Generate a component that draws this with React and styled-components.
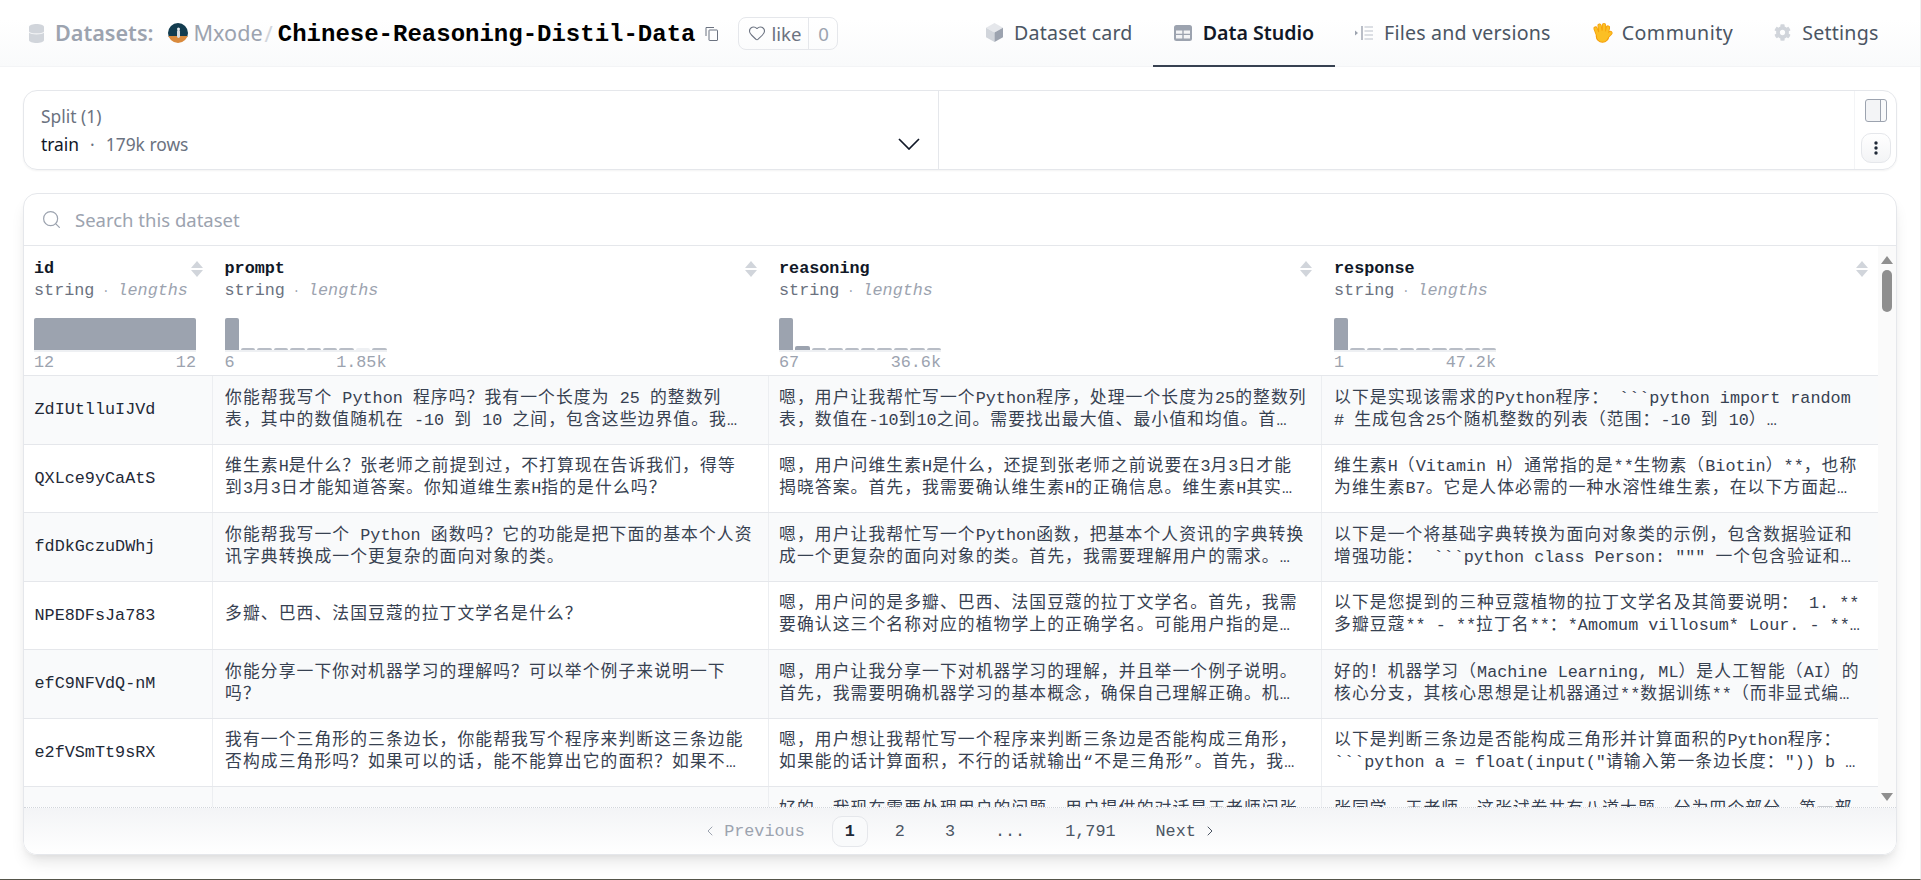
import styled, { createGlobalStyle } from "styled-components";
import { ChevronLeft, ChevronRight, Heart, Search } from "lucide-react";
import { FaCog } from "react-icons/fa";

const SANS = `"Noto Sans", "Noto Sans CJK SC", sans-serif`;
const MONO = `"Liberation Mono", "Noto Sans CJK SC", monospace`;

const GlobalStyle = createGlobalStyle`
  html, body {
    margin: 0;
    padding: 0;
    background: #fff;
    font-family: ${SANS};
  }
  * {
    box-sizing: border-box;
  }
`;

const Page = styled.div`
  height: 880px;
  overflow: hidden;
  display: flex;
  flex-direction: column;
  border-right: 1px solid #f0f0f0;
  border-bottom: 1px solid #55554a;
`;

const Header = styled.header`
  height: 67px;
  flex-shrink: 0;
  display: flex;
  align-items: center;
  padding: 0 21px 0 29px;
  background: linear-gradient(to top, #f9fafb, #fff 70%);
  border-bottom: 1px solid #f3f4f6;
`;

const Crumb = styled.span`
  font-size: 21.6px;
  line-height: 1;
  color: #9ca3af;
  font-weight: ${(p) => (p.$bold ? 600 : 400)};
`;

const IconSlot = styled.span`
  display: flex;
  margin: 0 ${(p) => p.$mr || 0}px 0 ${(p) => p.$ml || 0}px;
`;

const Slash = styled.span`
  font-size: 22px;
  line-height: 1;
  color: #d1d5db;
  margin: 0 5px 0 2px;
`;

const RepoName = styled.span`
  font-family: ${MONO};
  font-size: 24px;
  line-height: 1;
  font-weight: 700;
  color: #000;
  margin-top: 3px;
`;

const LikeBox = styled.div`
  display: flex;
  align-items: stretch;
  height: 33px;
  width: 100px;
  margin-left: 19px;
  border: 1px solid #e5e7eb;
  border-radius: 8px;
  font-size: 18.6px;
  color: #6b7280;
`;

const LikeLabel = styled.span`
  flex: 1;
  display: flex;
  align-items: center;
  gap: 5px;
  padding-left: 9px;
  border-right: 1px solid #e5e7eb;
`;

const LikeCount = styled.span`
  width: 28px;
  display: flex;
  align-items: center;
  justify-content: center;
  color: #9ca3af;
`;

const Tabs = styled.nav`
  margin-left: auto;
  display: flex;
  align-self: stretch;
  margin-bottom: -1px;
`;

const Tab = styled.a`
  display: flex;
  align-items: center;
  gap: 11px;
  padding: 0 20.5px;
  font-size: 19.6px;
  white-space: nowrap;
  letter-spacing: ${(p) => (p.$active ? 0 : p.$spacing || 0.2)}px;
  color: ${(p) => (p.$active ? "#111827" : "#4b5563")};
  font-weight: ${(p) => (p.$active ? 600 : 400)};
  border-bottom: 2px solid ${(p) => (p.$active ? "#374151" : "transparent")};
`;

const Main = styled.main`
  flex: 1;
  min-height: 0;
  display: flex;
  flex-direction: column;
  gap: 23px;
  padding: 23px 23px 24px 23px;
`;

const SplitCard = styled.section`
  height: 80px;
  flex-shrink: 0;
  display: grid;
  grid-template-columns: 915px 1fr 42px;
  border: 1px solid #e5e7eb;
  border-radius: 14px;
  box-shadow: 0 1px 2px rgba(0, 0, 0, 0.05);
`;

const SplitSelect = styled.div`
  display: flex;
  align-items: flex-end;
  justify-content: space-between;
  padding: 0 18px 11px 17px;
  border-right: 1px solid #e5e7eb;
`;

const SplitLabel = styled.div`
  font-size: 17.4px;
  line-height: 30px;
  color: #6b7280;
`;

const SplitValue = styled.div`
  font-size: 17.4px;
  line-height: 27px;
  color: #6b7280;

  b {
    font-weight: 400;
    color: #111827;
  }

  i {
    font-style: normal;
    margin: 0 11px;
  }
`;

const SelectChevron = styled.svg`
  margin-bottom: 8px;
`;

const SideTools = styled.div`
  display: flex;
  flex-direction: column;
  align-items: center;
  justify-content: space-between;
  padding: 8px 0 6px;
  border-left: 1px solid #f3f4f6;
`;

const PanelToggle = styled.div`
  width: 22px;
  height: 23px;
  border: 1px solid #9ca3af;
  border-radius: 3px;
  background: linear-gradient(to right, #f3f4f6 14px, #9ca3af 14px, #9ca3af 15px, #f9fafb 15px);
`;

const KebabButton = styled.button`
  width: 30px;
  height: 30px;
  padding: 0;
  display: flex;
  align-items: center;
  justify-content: center;
  border: 1px solid #e5e7eb;
  border-radius: 10px;
  background: linear-gradient(to bottom, #fff, #f3f4f6);
`;

const DataCard = styled.section`
  flex: 1;
  min-height: 0;
  display: flex;
  flex-direction: column;
  overflow: hidden;
  border: 1px solid #e5e7eb;
  border-radius: 14px;
  box-shadow: 0 10px 15px -3px rgba(0, 0, 0, 0.1), 0 4px 6px -2px rgba(0, 0, 0, 0.05);
`;

const SearchRow = styled.div`
  height: 52px;
  flex-shrink: 0;
  display: flex;
  align-items: center;
  gap: 13px;
  padding-left: 17px;
  border-bottom: 1px solid #e5e7eb;
  font-size: 18.5px;
  color: #9ca3af;
`;

const TableArea = styled.div`
  flex: 1;
  min-height: 0;
  display: flex;
  overflow: hidden;
`;

const Table = styled.div`
  flex: 1;
  min-width: 0;
  overflow: hidden;
  font-family: ${MONO};
  font-size: 16.8px;
`;

const Row = styled.div`
  display: grid;
  grid-template-columns: 189px 556px 553px 556px;
`;

const HeadRow = styled(Row)`
  height: 130px;
  border-bottom: 1px solid #e5e7eb;
`;

const HeadCell = styled.div`
  position: relative;
  padding: 12px 0 0 ${(p) => p.$pad}px;
`;

const ColName = styled.div`
  font-weight: 700;
  line-height: 22px;
  color: #111827;
`;

const ColType = styled.div`
  line-height: 22px;
  color: #6b7280;

  i {
    color: #9ca3af;
  }

  span {
    display: inline-block;
    width: 23px;
    text-align: center;
    font-size: 12px;
    color: #9ca3af;
  }
`;

const SortArrows = styled.div`
  position: absolute;
  top: 15px;
  right: ${(p) => p.$right}px;
  display: flex;
  flex-direction: column;
  gap: 2px;
`;

const SortArrow = styled.span`
  width: 0;
  height: 0;
  border-left: 6px solid transparent;
  border-right: 6px solid transparent;
  ${(p) => (p.$down ? "border-top" : "border-bottom")}: 7px solid #d1d5db;
`;

const Histogram = styled.div`
  width: 162px;
  height: 34px;
  margin-top: 15px;
  display: flex;
  align-items: flex-end;
  gap: 2px;
  border-bottom: 2px solid #eef0f3;
`;

const Bar = styled.span`
  flex: 1;
  min-width: 0;
  border-radius: 2px 2px 0 0;
  background: ${(p) => p.$tone};
`;

const RangeLabels = styled.div`
  width: 162px;
  display: flex;
  justify-content: space-between;
  line-height: 22px;
  color: #9ca3af;
`;

const DataRow = styled(Row)`
  height: 68.5px;
  background: ${(p) => (p.$odd ? "#f9fafb" : "#fff")};
  border-bottom: 1px solid #e5e7eb;
`;

const Cell = styled.div`
  display: flex;
  align-items: center;
  min-width: 0;
  padding: 0 ${(p) => p.$padR || 14.5}px 0 ${(p) => p.$pad}px;
  border-right: 1px solid #eceef1;
  color: #374151;

  &:last-child {
    border-right: none;
  }
`;

const Clamp = styled.div`
  display: -webkit-box;
  -webkit-box-orient: vertical;
  -webkit-line-clamp: 2;
  overflow: hidden;
  line-height: 22px;
  word-break: normal;
`;

const Han = styled.span`
  letter-spacing: 1.1px;
`;

const IdText = styled.span`
  color: #1f2937;
`;

const ScrollTrack = styled.div`
  width: 18px;
  flex-shrink: 0;
  display: flex;
  flex-direction: column;
  align-items: center;
  padding: 10px 0 6px;
  background: #fafafa;
`;

const ScrollArrow = styled.span`
  width: 0;
  height: 0;
  border-left: 6px solid transparent;
  border-right: 6px solid transparent;
  ${(p) => (p.$down ? "border-top" : "border-bottom")}: 8px solid #8f8f8f;
  margin-top: ${(p) => (p.$down ? "auto" : 0)};
`;

const ScrollThumb = styled.span`
  width: 10px;
  height: 42px;
  margin-top: 6px;
  border-radius: 5px;
  background: #8f8f8f;
`;

const Pagination = styled.nav`
  height: 47px;
  flex-shrink: 0;
  display: flex;
  align-items: center;
  justify-content: center;
  gap: 14px;
  border-top: 1px dotted #d1d5db;
  background: linear-gradient(to bottom, #f3f4f6, #fff);
  font-family: ${MONO};
  font-size: 16.8px;
`;

const PageLink = styled.a`
  height: 31px;
  display: flex;
  align-items: center;
  gap: 6px;
  padding: 0 12px;
  border-radius: 10px;
  border: 1px solid ${(p) => (p.$current ? "#e5e7eb" : "transparent")};
  background: ${(p) => (p.$current ? "#f9fafb" : "transparent")};
  font-weight: ${(p) => (p.$current ? 700 : 400)};
  color: ${(p) => (p.$muted ? "#9ca3af" : p.$current ? "#1f2937" : "#4b5563")};
`;

const DatabaseIcon = () => (
  <svg width="15" height="19" viewBox="0 0 15 19">
    <path d="M0 3c0-4 15-4 15 0v13c0 4-15 4-15 0z" fill="#d1d5db" />
    <path d="M0 8c2 2.6 13 2.6 15 0" fill="none" stroke="#f3f4f6" strokeWidth="1.2" />
  </svg>
);

const Avatar = () => (
  <svg width="20" height="20" viewBox="0 0 20 20">
    <defs>
      <clipPath id="avatar-clip">
        <circle cx="10" cy="10" r="10" />
      </clipPath>
    </defs>
    <g clipPath="url(#avatar-clip)">
      <rect width="20" height="14" fill="#123c4f" />
      <rect y="13" width="20" height="7" fill="#d98a3d" />
      <rect x="9" y="7" width="3" height="8" rx="1.4" fill="#d8dde0" />
      <circle cx="10.5" cy="6" r="1.5" fill="#e8ecef" />
    </g>
  </svg>
);

const CopyIcon = () => (
  <svg width="14" height="15" viewBox="0 0 14 15" fill="none" stroke="#6b7280" strokeWidth="1">
    <path d="M1 10V1.5h8" />
    <rect x="4" y="4" width="8.5" height="10.5" rx="0.5" />
  </svg>
);

const CubeIcon = () => (
  <svg width="17" height="19" viewBox="0 0 17 19">
    <path d="M8.5 0 17 4.7 8.5 9.4 0 4.7z" fill="#e5e7eb" />
    <path d="M0 4.7 8.5 9.4V19L0 14.3z" fill="#d1d5db" />
    <path d="M17 4.7 8.5 9.4V19l8.5-4.7z" fill="#9ca3af" />
  </svg>
);

const TableIcon = () => (
  <svg width="18" height="16" viewBox="0 0 18 16">
    <rect width="18" height="16" rx="2.5" fill="#9ca3af" />
    <path d="M2 5.5h6.3v3.2H2zM9.7 5.5H16v3.2H9.7zM2 10h6.3v3.5H2zM9.7 10H16v3.5H9.7z" fill="#f3f4f6" />
  </svg>
);

const FilesIcon = () => (
  <svg width="18" height="14" viewBox="0 0 18 14" fill="none">
    <path d="M0 4.5 3 7 0 9.5z" fill="#9ca3af" />
    <path d="M7 0v14" stroke="#9ca3af" strokeWidth="1.4" />
    <path d="M9.500 1H18M9.500 5H18M9.500 9H18M9.500 13H18" stroke="#d1d5db" strokeWidth="1.4" />
  </svg>
);

const HAND_STROKES = "M6 13 3.500 6.500M9 12.500 7.500 3.500M12 12.500 12 3M14.500 13 16 5.500M14 15.500 18.500 11M9 15h3";

const HandIcon = () => (
  <svg width="22" height="21" viewBox="0 0 22 21" fill="none" strokeLinecap="round">
    <circle cx="10.500" cy="14" r="6.200" fill="#fbbf24" stroke="#f59e0b" strokeWidth="1.200" />
    <path d={HAND_STROKES} stroke="#f59e0b" strokeWidth="4.200" />
    <path d={HAND_STROKES} stroke="#fbbf24" strokeWidth="2.600" />
    <circle cx="10.500" cy="14" r="5.600" fill="#fbbf24" />
  </svg>
);

const KebabIcon = () => (
  <svg width="4" height="14" viewBox="0 0 4 14" fill="#1f2937">
    <circle cx="2" cy="2" r="1.700" />
    <circle cx="2" cy="7" r="1.700" />
    <circle cx="2" cy="12" r="1.700" />
  </svg>
);

const rows = [
  {
    id: "ZdIUtlluIJVd",
    prompt: "你能帮我写个 Python 程序吗？我有一个长度为 25 的整数列表，其中的数值随机在 -10 到 10 之间，包含这些边界值。我需要找出最大值、最小值和平均值。",
    reasoning: "嗯，用户让我帮忙写一个Python程序，处理一个长度为25的整数列表，数值在-10到10之间。需要找出最大值、最小值和均值。首先，我需要生成这个列表。",
    response: "以下是实现该需求的Python程序： ```python import random # 生成包含25个随机整数的列表（范围：-10 到 10） random_numbers_list_with_values = [random.randint(-10, 10)]",
  },
  {
    id: "QXLce9yCaAtS",
    prompt: "维生素H是什么？张老师之前提到过，不打算现在告诉我们，得等到3月3日才能知道答案。你知道维生素H指的是什么吗？",
    reasoning: "嗯，用户问维生素H是什么，还提到张老师之前说要在3月3日才能揭晓答案。首先，我需要确认维生素H的正确信息。维生素H其实就是生物素，也叫维生素B7。",
    response: "维生素H（Vitamin H）通常指的是**生物素（Biotin）**，也称为维生素B7。它是人体必需的一种水溶性维生素，在以下方面起着重要作用，包括代谢和皮肤健康。",
  },
  {
    id: "fdDkGczuDWhj",
    prompt: "你能帮我写一个 Python 函数吗？它的功能是把下面的基本个人资讯字典转换成一个更复杂的面向对象的类。",
    reasoning: "嗯，用户让我帮忙写一个Python函数，把基本个人资讯的字典转换成一个更复杂的面向对象的类。首先，我需要理解用户的需求。用户希望把字典变成类。",
    response: "以下是一个将基础字典转换为面向对象类的示例，包含数据验证和增强功能： ```python class Person: \"\"\" 一个包含验证和增强功能的个人资讯类，支持多种操作。\"\"\"",
  },
  {
    id: "NPE8DFsJa783",
    prompt: "多瓣、巴西、法国豆蔻的拉丁文学名是什么？",
    reasoning: "嗯，用户问的是多瓣、巴西、法国豆蔻的拉丁文学名。首先，我需要确认这三个名称对应的植物学上的正确学名。可能用户指的是豆蔻属或相关属的植物。",
    response: "以下是您提到的三种豆蔻植物的拉丁文学名及其简要说明： 1. **多瓣豆蔻** - **拉丁名**：*Amomum villosum* Lour. - **特点**：多分布于亚洲热带地区。",
  },
  {
    id: "efC9NFVdQ-nM",
    prompt: "你能分享一下你对机器学习的理解吗？可以举个例子来说明一下吗？",
    reasoning: "嗯，用户让我分享一下对机器学习的理解，并且举一个例子说明。首先，我需要明确机器学习的基本概念，确保自己理解正确。机器学习是人工智能的一个分支。",
    response: "好的！机器学习（Machine Learning, ML）是人工智能（AI）的核心分支，其核心思想是让机器通过**数据训练**（而非显式编程）来学习规律，并做出预测。",
  },
  {
    id: "e2fVSmTt9sRX",
    prompt: "我有一个三角形的三条边长，你能帮我写个程序来判断这三条边能否构成三角形吗？如果可以的话，能不能算出它的面积？如果不是三角形就告诉我。",
    reasoning: "嗯，用户想让我帮忙写一个程序来判断三条边是否能构成三角形，如果能的话计算面积，不行的话就输出“不是三角形”。首先，我需要确认三角形的判定条件。",
    response: "以下是判断三条边是否能构成三角形并计算面积的Python程序： ```python a = float(input(\"请输入第一条边长度：\")) b = float(input(\"请输入第二条边长度：\"))",
  },
  {
    id: "",
    prompt: "",
    reasoning: "好的，我现在需要处理用户的问题。用户提供的对话是王老师问张同学关于试卷的情况，我需要分析这段对话的内容。",
    response: "张同学，王老师，这张试卷共有八道大题，分为四个部分。第一部分是选择题，第二部分是填空题，第三部分是解答题。",
  },
];

const columns = [
  { name: "id", pad: 10, sortRight: 10, from: "12", to: "12", bars: [32] },
  { name: "prompt", pad: 11.5, sortRight: 12, from: "6", to: "1.85k", bars: [32, 2, 2, 2, 2, 2, 2, 2, 0, 2] },
  { name: "reasoning", pad: 10, sortRight: 10, from: "67", to: "36.6k", bars: [32, 4, 2, 2, 2, 2, 2, 2, 2, 2] },
  { name: "response", pad: 12, sortRight: 10, from: "1", to: "47.2k", bars: [32, 2, 2, 2, 2, 2, 2, 2, 2, 2] },
];

function barTone(h) {
  if (h === 0) return "#eef0f3";
  return h <= 2 ? "#b8bdc6" : "#9ca3af";
}

// hanzi in the reference sit on a slightly wider advance than the mono latin
function MixedText({ text }) {
  const parts = text.split(/([\u3000-\u303f\u4e00-\u9fff\uff00-\uffef“”]+)/);
  return parts.map((part, i) => (i % 2 === 1 ? <Han key={i}>{part}</Han> : part));
}

function ColumnHead({ col }) {
  return (
    <HeadCell $pad={col.pad}>
      <ColName>{col.name}</ColName>
      <ColType>
        string<span>·</span>
        <i>lengths</i>
      </ColType>
      <SortArrows $right={col.sortRight}>
        <SortArrow />
        <SortArrow $down />
      </SortArrows>
      <Histogram>
        {col.bars.map((h, i) => (
          <Bar key={i} $tone={barTone(h)} style={{ height: Math.max(h, 2) }} />
        ))}
      </Histogram>
      <RangeLabels>
        <span>{col.from}</span>
        <span>{col.to}</span>
      </RangeLabels>
    </HeadCell>
  );
}

export default function App() {
  return (
    <>
      <GlobalStyle />
      <Page>
        <Header>
          <IconSlot $mr={11}>
            <DatabaseIcon />
          </IconSlot>
          <Crumb $bold>Datasets:</Crumb>
          <IconSlot $ml={14} $mr={6}>
            <Avatar />
          </IconSlot>
          <Crumb>Mxode</Crumb>
          <Slash>/</Slash>
          <RepoName>Chinese-Reasoning-Distil-Data</RepoName>
          <IconSlot $ml={10}>
            <CopyIcon />
          </IconSlot>
          <LikeBox>
            <LikeLabel>
              <Heart size={18} strokeWidth={1.4} />
              like
            </LikeLabel>
            <LikeCount>0</LikeCount>
          </LikeBox>
          <Tabs>
            <Tab>
              <CubeIcon />
              Dataset card
            </Tab>
            <Tab $active>
              <TableIcon />
              Data Studio
            </Tab>
            <Tab>
              <FilesIcon />
              Files and versions
            </Tab>
            <Tab $spacing={0.5}>
              <IconSlot $mr={-3}>
                <HandIcon />
              </IconSlot>
              Community
            </Tab>
            <Tab>
              <FaCog size={17} color="#d1d5db" />
              Settings
            </Tab>
          </Tabs>
        </Header>
        <Main>
          <SplitCard>
            <SplitSelect>
              <div>
                <SplitLabel>Split (1)</SplitLabel>
                <SplitValue>
                  <b>train</b>
                  <i>·</i>
                  179k rows
                </SplitValue>
              </div>
              <SelectChevron width="22" height="12" viewBox="0 0 22 12" fill="none" stroke="#111827" strokeWidth="1.7">
                <path d="M1 1 11 11 21 1" />
              </SelectChevron>
            </SplitSelect>
            <div />
            <SideTools>
              <PanelToggle />
              <KebabButton>
                <KebabIcon />
              </KebabButton>
            </SideTools>
          </SplitCard>
          <DataCard>
            <SearchRow>
              <Search size={21} strokeWidth={1.4} color="#9ca3af" />
              Search this dataset
            </SearchRow>
            <TableArea>
              <Table>
                <HeadRow>
                  {columns.map((col) => (
                    <ColumnHead key={col.name} col={col} />
                  ))}
                </HeadRow>
                {rows.map((row, i) => (
                  <DataRow key={i} $odd={i % 2 === 0}>
                    <Cell $pad={10.5}>
                      <IdText>{row.id}</IdText>
                    </Cell>
                    <Cell $pad={12}>
                      <Clamp><MixedText text={row.prompt} /></Clamp>
                    </Cell>
                    <Cell $pad={10} $padR={13.8}>
                      <Clamp><MixedText text={row.reasoning} /></Clamp>
                    </Cell>
                    <Cell $pad={12}>
                      <Clamp><MixedText text={row.response} /></Clamp>
                    </Cell>
                  </DataRow>
                ))}
              </Table>
              <ScrollTrack>
                <ScrollArrow />
                <ScrollThumb />
                <ScrollArrow $down />
              </ScrollTrack>
            </TableArea>
            <Pagination>
              <PageLink $muted>
                <ChevronLeft size={16} strokeWidth={1.5} />
                Previous
              </PageLink>
              <PageLink $current>1</PageLink>
              <PageLink>2</PageLink>
              <PageLink>3</PageLink>
              <PageLink>...</PageLink>
              <PageLink>1,791</PageLink>
              <PageLink>
                Next
                <ChevronRight size={16} strokeWidth={1.5} />
              </PageLink>
            </Pagination>
          </DataCard>
        </Main>
      </Page>
    </>
  );
}
